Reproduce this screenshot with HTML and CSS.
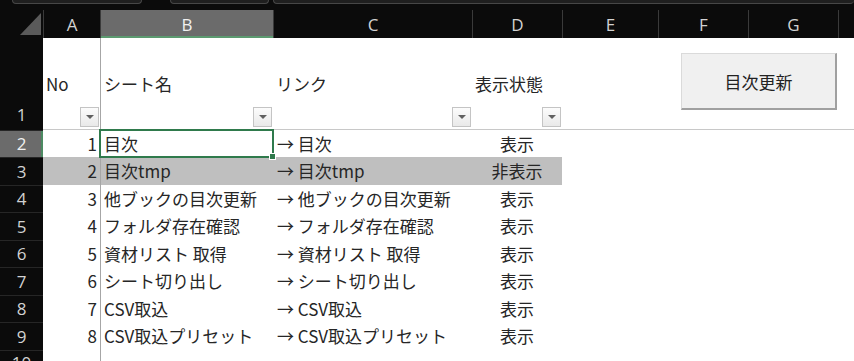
FILE: index.html
```html
<!DOCTYPE html>
<html lang="ja">

<head>
    <meta charset="UTF-8">
    <meta name="viewport" content="width=device-width, initial-scale=1.0">
    <title>目次</title>
    <link rel="stylesheet" href="styles.css">
</head>

<body>
    <div class="topbar">
        <span class="tb tb-name"></span>
        <span class="tb tb-fx"></span>
        <span class="tb tb-formula"></span>
    </div>

    <div class="sheet">
        <div class="row colheads">
            <div class="corner"><span class="corner-tri"></span></div>
            <div class="ch">A</div>
            <div class="ch sel">B</div>
            <div class="ch">C</div>
            <div class="ch">D</div>
            <div class="ch">E</div>
            <div class="ch">F</div>
            <div class="ch">G</div>
            <div class="ch"></div>
        </div>

        <div class="row head-row">
            <div class="rh">1</div>
            <div class="c">No<span class="filter"></span></div>
            <div class="c col-b">シート名<span class="filter"></span></div>
            <div class="c">リンク<span class="filter"></span></div>
            <div class="c">表示状態<span class="filter"></span></div>
            <div class="c"></div>
            <div class="c"></div>
            <div class="c"></div>
            <div class="c"></div>
        </div>

        <div id="rows"></div>

        <button class="macro-btn">目次更新</button>
    </div>

    <script>
        const sheets = [
            { name: '目次', state: '表示' },
            { name: '目次tmp', state: '非表示' },
            { name: '他ブックの目次更新', state: '表示' },
            { name: 'フォルダ存在確認', state: '表示' },
            { name: '資材リスト 取得', state: '表示' },
            { name: 'シート切り出し', state: '表示' },
            { name: 'CSV取込', state: '表示' },
            { name: 'CSV取込プリセット', state: '表示' }
        ];

        function renderRows() {
            const rows = document.getElementById('rows');
            let html = sheets.map((s, i) => {
                const hidden = s.state === '非表示' ? ' hidden-row' : '';
                const selRow = i === 0 ? ' sel' : '';
                const selCell = i === 0 ? ' active' : '';
                return `
                    <div class="row data-row${hidden}">
                        <div class="rh${selRow}">${i + 2}</div>
                        <div class="c num">${i + 1}</div>
                        <div class="c col-b${selCell}">${s.name}</div>
                        <div class="c link">→ ${s.name}</div>
                        <div class="c state">${s.state}</div>
                        <div class="c plain"></div>
                        <div class="c plain"></div>
                        <div class="c plain"></div>
                        <div class="c plain"></div>
                    </div>
                `;
            }).join('');
            html += `
                <div class="row data-row last-row">
                    <div class="rh">10</div>
                    <div class="c"></div>
                    <div class="c col-b"></div>
                </div>
            `;
            rows.innerHTML = html;
        }

        renderRows();
    </script>
</body>

</html>
```

FILE: styles.css
```css
body {
    margin: 0;
    padding: 0;
    background-color: #fff;
    font-family: "Noto Sans CJK JP", sans-serif;
    color: #262626;
    overflow: hidden;
}

.topbar {
    display: flex;
    height: 10px;
    background-color: #0b0b0b;
    padding-left: 12px;
    box-sizing: border-box;
}

.tb {
    display: block;
    height: 3px;
    background-color: #1f1f1f;
    border: 1px solid #474747;
    border-top: none;
    border-radius: 0 0 4px 4px;
}

.tb-name {
    width: 128px;
}

.tb-fx {
    width: 97px;
    margin-left: 28px;
}

.tb-formula {
    flex: 1;
    margin-left: 4px;
    border-right: none;
}

.sheet {
    position: relative;
}

.row {
    display: grid;
    grid-template-columns: 43px 57px 173px 199px 90px 96px 90px 90px 1fr;
    height: 27.5px;
}

.colheads {
    height: 28px;
    background-color: #0b0b0b;
}

.corner {
    position: relative;
}

.corner-tri {
    position: absolute;
    left: 20px;
    top: 3px;
    width: 21px;
    height: 22px;
    background-color: #5a5a5a;
    clip-path: polygon(100% 0, 100% 100%, 0 100%);
}

.ch {
    display: flex;
    align-items: center;
    justify-content: center;
    border-left: 1px solid #3a3a3a;
    color: #d2d2d2;
    font-family: "Open Sans", sans-serif;
    font-size: 17px;
    box-sizing: border-box;
}

.ch.sel {
    background-color: #6b6b6b;
    color: #f0f0f0;
    box-shadow: inset 0 -2px 0 #5c9a70;
}

.rh {
    display: flex;
    align-items: center;
    justify-content: center;
    background-color: #0b0b0b;
    color: #d2d2d2;
    font-family: "Open Sans", sans-serif;
    font-size: 17px;
    border-top: 1px solid #262626;
    box-sizing: border-box;
}

.rh.sel {
    background-color: #6b6b6b;
    color: #f0f0f0;
    box-shadow: inset -2px 0 0 #4c8a62;
}

.head-row {
    height: 91.5px;
}

.head-row .rh {
    align-items: flex-end;
    padding-bottom: 4px;
    border-top: none;
}

.last-row .rh {
    align-items: flex-start;
}

.head-row .c {
    position: relative;
    border-bottom: 1px solid #c8c8c8;
}

.c {
    display: flex;
    align-items: center;
    padding: 0 3px;
    font-size: 17px;
    line-height: 1;
    white-space: nowrap;
    box-sizing: border-box;
}

.link {
    padding-left: 4px;
}

.col-b {
    border-left: 1px solid #a6a6a6;
}

.num {
    justify-content: flex-end;
}

.state {
    justify-content: center;
}

.hidden-row .c {
    background-color: #bfbfbf;
}

.hidden-row .c.plain {
    background-color: transparent;
}

.active {
    position: relative;
    outline: 2px solid #2f7a4c;
    outline-offset: -1px;
}

.active::after {
    content: "";
    position: absolute;
    right: -3px;
    bottom: -3px;
    width: 5px;
    height: 5px;
    background-color: #2f7a4c;
    border: 1px solid #fff;
}

.filter {
    position: absolute;
    right: 1px;
    bottom: 2px;
    width: 19px;
    height: 20px;
    border: 1px solid #c4c4c4;
    background: linear-gradient(#fcfcfc, #e9e9e9);
    box-sizing: border-box;
}

.filter::after {
    content: "";
    position: absolute;
    left: 5px;
    top: 7px;
    border-left: 4px solid transparent;
    border-right: 4px solid transparent;
    border-top: 4px solid #606060;
}

.macro-btn {
    position: absolute;
    left: 681px;
    top: 43px;
    width: 156px;
    height: 57px;
    background-color: #f0f0f0;
    border: 1px solid #dadada;
    border-right: 2px solid #a0a0a0;
    border-bottom: 2px solid #a0a0a0;
    font-family: "Noto Sans CJK JP", sans-serif;
    font-size: 17px;
    color: #222;
    padding: 0;
}
```
